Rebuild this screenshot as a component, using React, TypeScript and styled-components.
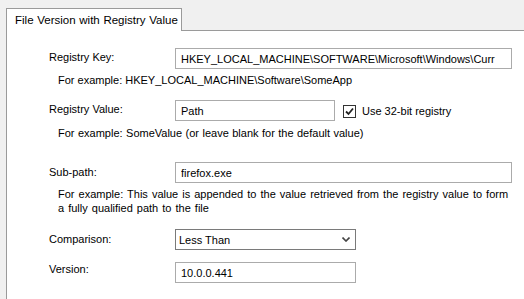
import React from "react";
import styled, { createGlobalStyle } from "styled-components";

const Global = createGlobalStyle`
  html, body { margin: 0; padding: 0; background: #f0f0f0; }
  body {
    font-family: "Liberation Sans", Arial, sans-serif;
    font-size: 11px;
    color: #000;
    overflow: hidden;
  }
`;

const Page = styled.div`
  width: 524px;
  height: 299px;
  padding: 8px 0 0 6px;
  box-sizing: border-box;
  display: flex;
  flex-direction: column;
`;

const TabStrip = styled.div`
  display: flex;
  position: relative;
  z-index: 1;
  margin-bottom: -1px;
`;

const Tab = styled.div`
  width: 176px;
  height: 23px;
  box-sizing: border-box;
  background: #fff;
  border: 1px solid #9a9a9a;
  border-bottom: none;
  padding: 4px 0 0 8px;
  line-height: 14px;
  font-size: 11.5px;
  word-spacing: 0.5px;
  white-space: nowrap;
`;

const Panel = styled.div`
  flex: 1;
  background: #fff;
  border-top: 1px solid #9a9a9a;
  border-left: 1px solid #9a9a9a;
  padding: 17px 0 0 42px;
  display: flex;
  flex-direction: column;
`;

const Row = styled.div<{ $mt?: number }>`
  display: flex;
  align-items: flex-start;
  margin-top: ${(p) => p.$mt ?? 0}px;
`;

const Label = styled.div<{ $pt?: number }>`
  width: 126px;
  flex: none;
  line-height: 14px;
  padding-top: ${(p) => p.$pt ?? 2}px;
  white-space: nowrap;
`;

const TextBox = styled.input<{ $w: number }>`
  width: ${(p) => p.$w}px;
  height: 21px;
  box-sizing: border-box;
  border: 1px solid #ababab;
  background: #fff;
  padding: 0 0 0 5px;
  margin: 0;
  font: inherit;
  color: #000;
  outline: none;
  overflow: hidden;
`;

const Hint = styled.div<{ $mt?: number; $ws?: number }>`
  padding-left: 9px;
  margin-top: ${(p) => p.$mt ?? 4}px;
  line-height: 14px;
  word-spacing: ${(p) => p.$ws ?? 0}px;
`;

const CheckWrap = styled.label`
  display: flex;
  align-items: center;
  margin-left: 8px;
  margin-top: 4px;
  gap: 6px;
  line-height: 14px;
`;

const CheckBox = styled.span`
  width: 13px;
  height: 13px;
  box-sizing: border-box;
  border: 1px solid #333;
  background: #fff;
  display: flex;
  align-items: center;
  justify-content: center;
`;

const Select = styled.div`
  width: 181px;
  height: 21px;
  box-sizing: border-box;
  border: 1px solid #7a7a7a;
  background: #fff;
  display: flex;
  align-items: center;
  justify-content: space-between;
  padding: 0 5px 0 3px;
`;

export default function App() {
  return (
    <>
      <Global />
      <Page>
        <TabStrip>
          <Tab>File Version with Registry Value</Tab>
        </TabStrip>
        <Panel>
          <Row>
            <Label>Registry Key:</Label>
            <TextBox $w={337} readOnly defaultValue="HKEY_LOCAL_MACHINE\SOFTWARE\Microsoft\Windows\Curr" />
          </Row>
          <Hint>For example: HKEY_LOCAL_MACHINE\Software\SomeApp</Hint>

          <Row $mt={13}>
            <Label>Registry Value:</Label>
            <TextBox $w={160} readOnly defaultValue="Path" />
            <CheckWrap>
              <CheckBox>
                <svg width="9" height="9" viewBox="0 0 9 9">
                  <path d="M1 4.5 L3.5 7 L8 1.5" fill="none" stroke="#222" strokeWidth="1.8" />
                </svg>
              </CheckBox>
              Use 32-bit registry
            </CheckWrap>
          </Row>
          <Hint $mt={5} $ws={0.4}>For example: SomeValue (or leave blank for the default value)</Hint>

          <Row $mt={22}>
            <Label $pt={3}>Sub-path:</Label>
            <TextBox $w={337} readOnly defaultValue="firefox.exe" />
          </Row>
          <Hint $ws={1}>
            For example: This value is appended to the value retrieved from the registry value to form
            <br />
            a fully qualified path to the file
          </Hint>

          <Row $mt={14}>
            <Label $pt={3}>Comparison:</Label>
            <Select>
              <span>Less Than</span>
              <svg width="8" height="5" viewBox="0 0 8 5">
                <path d="M0.5 0.5 L4 4 L7.5 0.5" fill="none" stroke="#444" strokeWidth="1.6" />
              </svg>
            </Select>
          </Row>

          <Row $mt={12}>
            <Label $pt={0}>Version:</Label>
            <TextBox $w={181} readOnly defaultValue="10.0.0.441" />
          </Row>
        </Panel>
      </Page>
    </>
  );
}
